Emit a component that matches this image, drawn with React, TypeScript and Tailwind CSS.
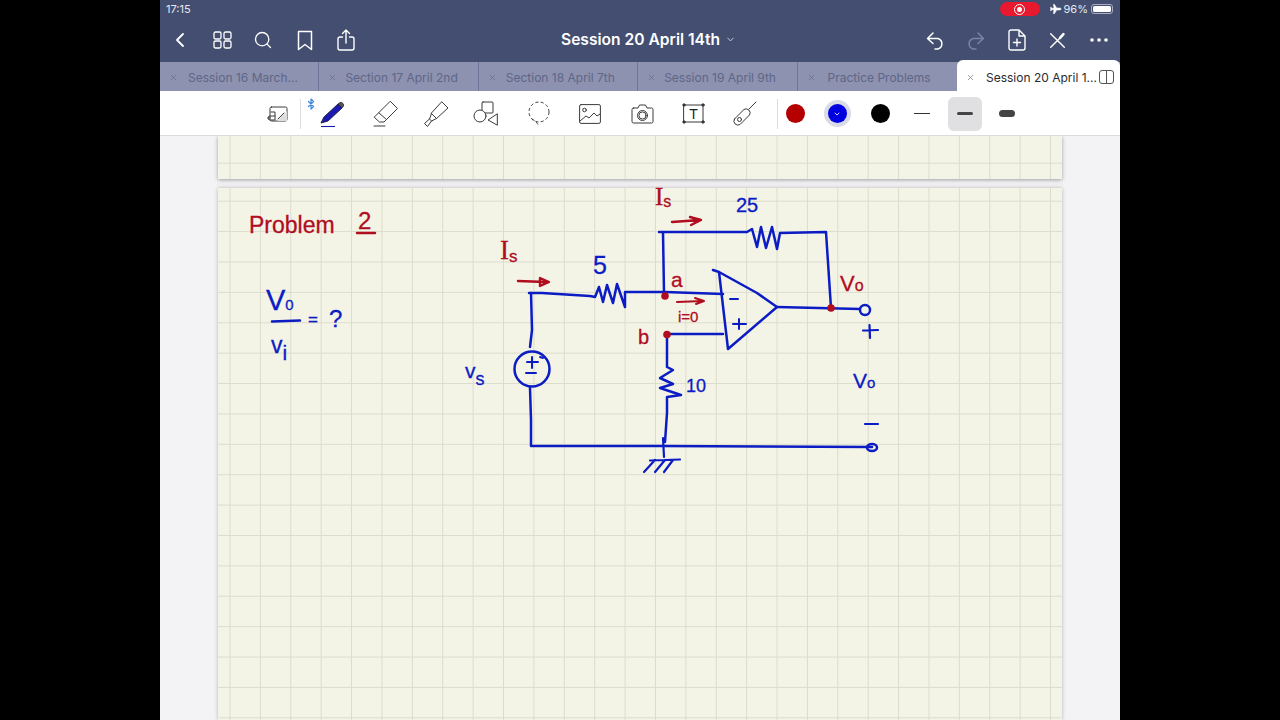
import React from "react";
import { Bluetooth, ChevronDown, ChevronLeft, Search, Plane, X } from "lucide-react";

const gridPage =
  "bg-[#f4f4e6] bg-[linear-gradient(#dcdccd_1.2px,transparent_1.2px),linear-gradient(90deg,#dcdccd_1.2px,transparent_1.2px)] bg-[size:30.4px_30.4px]";

function NavSlot({ children }: { children: React.ReactNode }) {
  return <div className="flex h-full w-[41.4px] shrink-0 items-center justify-center">{children}</div>;
}

function Tab({ label, gap, last }: { label: string; gap: string; last?: boolean }) {
  return (
    <div className={`flex h-[29px] w-[159.4px] shrink-0 items-center pl-[9px] pt-[2px] text-[12px] text-[#5f6686] ${last ? "" : "border-r border-[#6f769a]"}`}>
      <X size={9} strokeWidth={1.6} className={`shrink-0 ${gap}`} />
      <span className="whitespace-nowrap">{label}</span>
    </div>
  );
}

function ToolSlot({ w, children }: { w: string; children: React.ReactNode }) {
  return <div className={`relative flex h-full shrink-0 items-center justify-center ${w}`}>{children}</div>;
}

const ink = { fill: "none", stroke: "#3a3a3a", strokeWidth: 1, strokeLinecap: "round" as const, strokeLinejoin: "round" as const };

function Drawing() {
  const blue = { fill: "none", stroke: "#0b1cc4", strokeWidth: 2.5, strokeLinecap: "round" as const, strokeLinejoin: "round" as const };
  const red = { fill: "none", stroke: "#b00d1f", strokeWidth: 2.4, strokeLinecap: "round" as const, strokeLinejoin: "round" as const };
  const redText = { fill: "#b00d1f", stroke: "#b00d1f", strokeWidth: 0.3 };
  const blueText = { fill: "#0b1cc4", stroke: "#0b1cc4", strokeWidth: 0.3 };
  return (
    <svg viewBox="218 188 844 532" className="absolute inset-0 h-[532px] w-[844px] overflow-visible font-['Liberation_Sans',sans-serif]">
      {/* wires */}
      <path {...blue} d="M529 293 L542 293 L590 296 L595 297 L599 287 L603 302 L607 285 L613 303 L617 284 L625 307 L625 292 L665 292 L723 294" />
      <path {...blue} d="M531 293 L532 330 L530 347" />
      <circle {...blue} cx="532" cy="369" r="17.5" />
      <path {...blue} d="M530 388 L531 420 L531 446 L660 446 L872 447" />
      <ellipse {...blue} cx="872" cy="447.5" rx="5" ry="3.5" />
      <path {...blue} d="M532 357 V368 M527 362 H538 M526 373 H536 M540 357 L543 358" strokeWidth="2" />
      <path {...blue} d="M663 438 L664 457 M650 460.5 L680 459.5 M655 460 L644 472 M665 460 L655 472 M673 460 L664 472" strokeWidth="2.2" />
      <path {...blue} d="M664 293 L663 232 M659 232 L747 232 L752 229 L757 247 L761 227 L766 248 L772 227 L777 249 L780 233 L826 232 L831 308" />
      <path {...blue} d="M777 307 L860 309" />
      <circle {...blue} cx="865" cy="310" r="5" fill="#f4f4e6" />
      <path {...blue} d="M713 270 L719 272 L757 293 L777 307 L728 349 L719 272" />
      <path {...blue} d="M730 299 H738 M733 324 H746 M739 319 V329" strokeWidth="2" />
      <path {...blue} d="M667 334 L723 334 M667 334 L667 367 L673 370 L660 378 L673 384 L660 388 L681 395 L667 397 L667 413 L665 442" />
      <path {...blue} d="M863 330.5 L878 330 M869.5 325 L870 338 M865 424 H878" strokeWidth="2.2" />
      <path {...blue} d="M272 321.5 L300 320.5" />
      {/* red marks */}
      <path {...red} d="M518 281 L546 282 M540 278 L549 282 L540 286 Z" />
      <path {...red} d="M672 222 L700 220 M690 217 L701 220 L691 225" />
      <path {...red} d="M677 302 L703 301 M695 298 L704 301 L696 304" strokeWidth="2" />
      <path {...red} d="M357 233 H375" />
      <circle cx="665" cy="296" r="3.8" fill="#b00d1f" />
      <circle cx="667" cy="334.5" r="3.8" fill="#b00d1f" />
      <circle cx="831" cy="308" r="3.8" fill="#b00d1f" />
      {/* labels */}
      <text {...redText} x="249" y="233" fontSize="23">Problem</text>
      <text {...redText} x="358" y="229" fontSize="24">2</text>
      <text {...redText} x="500" y="259" fontSize="27" className="font-['Liberation_Serif',serif]">I<tspan fontSize="17" dy="3" className="font-['Liberation_Sans',sans-serif]">s</tspan></text>
      <text {...redText} x="655" y="205" fontSize="25" className="font-['Liberation_Serif',serif]">I<tspan fontSize="16" dy="2" className="font-['Liberation_Sans',sans-serif]">s</tspan></text>
      <text {...blueText} x="593" y="274" fontSize="25">5</text>
      <text {...blueText} x="736" y="212" fontSize="20">25</text>
      <text {...redText} x="671" y="287" fontSize="21">a</text>
      <text {...redText} x="638" y="344" fontSize="20">b</text>
      <text {...redText} x="678" y="322" fontSize="15">i=0</text>
      <text {...redText} x="840" y="291" fontSize="22">V<tspan fontSize="16">o</tspan></text>
      <text {...blueText} x="853" y="388" fontSize="21">V<tspan fontSize="15">o</tspan></text>
      <text {...blueText} x="686" y="392" fontSize="18">10</text>
      <text {...blueText} x="465" y="378" fontSize="21">v<tspan fontSize="18" dy="7">s</tspan></text>
      <text {...blueText} x="266" y="310" fontSize="29">V<tspan fontSize="15">0</tspan></text>
      <text {...blueText} x="271" y="353" fontSize="23">v<tspan dy="7" fontSize="21">i</tspan></text>
      <text {...blueText} x="308" y="325" fontSize="17">=</text>
      <text {...blueText} x="329" y="327" fontSize="24">?</text>
    </svg>
  );
}

export default function App() {
  return (
    <div className="flex h-[720px] w-[1280px] overflow-hidden bg-black font-['Inter',sans-serif]">
      <div className="w-40 shrink-0" />
      <div className="flex h-full w-[960px] shrink-0 flex-col overflow-hidden bg-[#f3f3f5]">
        {/* status + nav */}
        <div className="flex h-[62px] shrink-0 flex-col bg-[#434e70] text-white">
          <div className="flex h-[18px] items-center justify-between pl-[6px] pr-[7px] text-[11px] text-[#e6e8f0]">
            <span>17:15</span>
            <div className="flex items-center">
              <div className="flex h-[14px] w-[40px] items-center justify-center rounded-full bg-[#e8192e]">
                <div className="flex h-[11px] w-[11px] items-center justify-center rounded-full border border-white">
                  <div className="h-[5px] w-[5px] rounded-full bg-white" />
                </div>
              </div>
              <Plane size={12} fill="white" strokeWidth={1} className="ml-[9px] rotate-45" />
              <span className="ml-[3px]">96%</span>
              <div className="ml-[3px] flex h-[10px] w-[22px] items-center rounded-[3px] border border-[#a9aec2] p-[1px]">
                <div className="h-full w-[18px] rounded-[1.5px] bg-white" />
              </div>
            </div>
          </div>
          <div className="flex h-[44px] items-center">
            <div className="flex h-full w-[401px] shrink-0 items-center">
              <NavSlot><ChevronLeft size={24} strokeWidth={1.8} className="mr-[2px]" /></NavSlot>
              <NavSlot>
                <svg width="19" height="18" viewBox="0 0 19 18" fill="none" stroke="white" strokeWidth="1.3">
                  <rect x="1" y="1" width="7" height="7" rx="1.5" /><rect x="11" y="1" width="7" height="7" rx="1.5" />
                  <rect x="1" y="10" width="7" height="7" rx="1.5" /><rect x="11" y="10" width="7" height="7" rx="1.5" />
                </svg>
              </NavSlot>
              <NavSlot><Search size={20} strokeWidth={1.6} /></NavSlot>
              <NavSlot>
                <svg width="16" height="21" viewBox="0 0 16 21" fill="none" stroke="white" strokeWidth="1.5" strokeLinejoin="round">
                  <path d="M1.5 1.5 H14.5 V19.5 L8 14.5 L1.5 19.5 Z" />
                </svg>
              </NavSlot>
              <NavSlot>
                <svg width="18" height="22" viewBox="0 0 18 22" fill="none" stroke="white" strokeWidth="1.4" strokeLinecap="round" strokeLinejoin="round">
                  <path d="M5.5 8 H3 A2 2 0 0 0 1 10 V19 A2 2 0 0 0 3 21 H15 A2 2 0 0 0 17 19 V10 A2 2 0 0 0 15 8 H12.5 M9 14 V1 M5.5 4.5 L9 1 L12.5 4.5" />
                </svg>
              </NavSlot>
            </div>
            <div className="flex items-center whitespace-nowrap text-[15.6px] font-semibold">
              Session 20 April 14th
              <ChevronDown size={11} strokeWidth={2} className="ml-[5px] text-[#d5d8e4]" />
            </div>
            <div className="flex h-full flex-1 items-center justify-end">
              <NavSlot>
                <svg width="19" height="19" viewBox="0 0 19 19" fill="none" stroke="white" strokeWidth="1.5" strokeLinecap="round" strokeLinejoin="round" className="ml-[3px]">
                  <path d="M7 2 L1.5 7.5 L7 12.5 M1.5 7.5 H12 A5.5 5.5 0 0 1 12 18 H9" />
                </svg>
              </NavSlot>
              <NavSlot>
                <svg width="19" height="19" viewBox="0 0 19 19" fill="none" stroke="#7a83a3" strokeWidth="1.5" strokeLinecap="round" strokeLinejoin="round">
                  <path d="M12 2 L17.5 7.5 L12 12.5 M17.5 7.5 H7 A5.5 5.5 0 0 0 7 18 H10" />
                </svg>
              </NavSlot>
              <NavSlot>
                <svg width="18" height="22" viewBox="0 0 18 22" fill="none" stroke="white" strokeWidth="1.4" strokeLinecap="round" strokeLinejoin="round">
                  <path d="M3 1 H11 L17 7 V19 A2 2 0 0 1 15 21 H3 A2 2 0 0 1 1 19 V3 A2 2 0 0 1 3 1 Z M11 1 V7 H17 M9 10 V17 M5.5 13.5 H12.5" />
                </svg>
              </NavSlot>
              <NavSlot>
                <svg width="17" height="17" viewBox="0 0 20 20" fill="none" stroke="white" strokeWidth="1.7" strokeLinecap="round">
                  <path d="M2 2 L18 18 M2 18 L13 7" />
                  <path d="M13 7 L17 2.5" strokeWidth="3" />
                </svg>
              </NavSlot>
              <NavSlot>
                <svg width="18" height="4" viewBox="0 0 18 4" fill="white">
                  <circle cx="2" cy="2" r="1.8" /><circle cx="9" cy="2" r="1.8" /><circle cx="16" cy="2" r="1.8" />
                </svg>
              </NavSlot>
            </div>
          </div>
        </div>
        {/* tabs */}
        <div className="relative flex h-[29px] shrink-0 bg-[#8c92b0]">
          <Tab label="Session 16 March..." gap="mr-[10px]" />
          <Tab label="Section 17 April 2nd" gap="mr-[8px]" />
          <Tab label="Section 18 April 7th" gap="mr-[9px]" />
          <Tab label="Session 19 April 9th" gap="mr-[8px]" />
          <Tab label="Practice Problems" gap="mr-[12px]" last />
          <div className="absolute bottom-0 right-0 flex h-[31px] w-[163px] items-center rounded-t-[6px] bg-white pl-[9px] pt-[4px] text-[12px] text-[#2a2a2e]">
            <X size={9} strokeWidth={1.6} className="mr-[11px] shrink-0 text-[#666]" />
            <span className="w-[108px] whitespace-nowrap">Session 20 April 1...</span>
            <svg width="15" height="14" viewBox="0 0 15 14" fill="none" stroke="#555" strokeWidth="1" className="ml-[5px] mt-[-2px] shrink-0">
              <rect x="0.5" y="0.5" width="14" height="13" rx="2.5" /><path d="M7.5 0.5 V13.5" />
            </svg>
          </div>
        </div>
        {/* toolbar */}
        <div className="flex h-[45px] shrink-0 items-center border-b border-[#dcdcdc] bg-white pl-[107px] pt-[1px]">
          <div className="mt-[1px] h-[16px] w-[21px] shrink-0">
            <svg width="21" height="16" viewBox="0 0 21 16" {...ink}>
              <rect x="3" y="1" width="17" height="14" rx="1.5" />
              <path d="M20 5 V15 H10 Z" fill="#ddd" stroke="none" />
              <path d="M11 13 L17 7" />
              <path d="M4 6 H8 V14 H3 A2 2 0 0 1 3 10 H8 M1 12 H3" />
            </svg>
          </div>
          <div className="ml-[12px] h-[30px] w-px shrink-0 bg-[#dddddd]" />
          <ToolSlot w="ml-[5px] w-[52px]">
            <Bluetooth size={12} strokeWidth={2.4} className="absolute left-[-1px] top-[6px] text-[#3b86d8]" />
            <svg width="28" height="28" viewBox="0 0 28 28" fill="none" strokeLinejoin="round" className="mt-[1px]">
              <path d="M3 23 L6 17 L20 4 L24 8 L10 21 Z" fill="#1a1ab0" stroke="#22224a" strokeWidth="1" />
              <path d="M20 4 L22 2.5 Q24 2 25 3.5 Q26 5 25.5 6 L24 8 Z" fill="#555" stroke="#222" strokeWidth="0.8" />
              <path d="M3 26.5 H17" stroke="#1a1ab0" strokeWidth="1.1" />
            </svg>
          </ToolSlot>
          <ToolSlot w="w-[53px]">
            <svg width="28" height="28" viewBox="0 0 28 28" {...ink}>
              <path d="M19.5 1.5 L26.5 8.5 L13 22 H8.5 L3.5 17.5 Z M8 13 L15.5 19.5 M3 26 H14" />
            </svg>
          </ToolSlot>
          <ToolSlot w="w-[50px]">
            <svg width="28" height="28" viewBox="0 0 28 28" {...ink}>
              <path d="M20 2 L26 8 L14.5 18.5 L9.5 13.5 Z M9.5 13.5 L7.5 19 L2.5 23.5 L5.5 26.5 L9.5 21 L14.5 18.5 M7.5 19 L9.5 21" />
            </svg>
          </ToolSlot>
          <ToolSlot w="w-[50px]">
            <svg width="26" height="26" viewBox="0 0 26 26" {...ink}>
              <rect x="9" y="1" width="11" height="11" rx="1" />
              <circle cx="7" cy="15" r="6" fill="white" />
              <path d="M24 13 L15 19 L24 24 Z" />
            </svg>
          </ToolSlot>
          <ToolSlot w="w-[56px]">
            <svg width="24" height="26" viewBox="0 0 24 26" {...ink}>
              <circle cx="12" cy="11" r="10" strokeDasharray="3 2.4" strokeLinecap="butt" />
              <path d="M5 18 Q9 20 12 25" strokeDasharray="3 2.4" strokeLinecap="butt" />
            </svg>
          </ToolSlot>
          <ToolSlot w="w-[46px]">
            <svg width="22" height="20" viewBox="0 0 22 20" {...ink}>
              <rect x="0.6" y="0.6" width="20.8" height="18.8" rx="1.5" />
              <circle cx="5.5" cy="6" r="1.8" />
              <path d="M1 17 L7 12 L10 14 L15 9 L18 12 L21 10" />
            </svg>
          </ToolSlot>
          <ToolSlot w="w-[58px]">
            <svg width="23" height="20" viewBox="0 0 23 20" {...ink}>
              <path d="M2.5 4 H7 L8.5 1 H14.5 L16 4 H20.5 A1.5 1.5 0 0 1 22 5.5 V17.5 A1.5 1.5 0 0 1 20.5 19 H2.5 A1.5 1.5 0 0 1 1 17.5 V5.5 A1.5 1.5 0 0 1 2.5 4 Z" />
              <circle cx="11.5" cy="11.5" r="5" /><circle cx="11.5" cy="11.5" r="3.6" />
            </svg>
          </ToolSlot>
          <ToolSlot w="w-[44px]">
            <svg width="23" height="21" viewBox="0 0 23 21" {...ink}>
              <rect x="2" y="2" width="19" height="17" />
              <circle cx="2" cy="2" r="1.2" fill="#333" /><circle cx="21" cy="2" r="1.2" fill="#333" />
              <circle cx="2" cy="19" r="1.2" fill="#333" /><circle cx="21" cy="19" r="1.2" fill="#333" />
              <text x="11.5" y="15.5" textAnchor="middle" fontSize="14" fill="#222" stroke="none" className="font-['Liberation_Sans',sans-serif]">T</text>
            </svg>
          </ToolSlot>
          <ToolSlot w="w-[60px]">
            <svg width="24" height="26" viewBox="0 0 24 26" {...ink}>
              <path d="M1.5 18 L11 8.5 A4 4 0 0 1 16.5 14 L7 23.5 A4 4 0 0 1 1.5 18 Z" />
              <circle cx="6.5" cy="18.5" r="2" />
              <path d="M16 8 L23 1" />
            </svg>
          </ToolSlot>
          <div className="ml-[2px] h-[30px] w-px shrink-0 bg-[#dddddd]" />
          <ToolSlot w="w-[34px]"><div className="h-[19px] w-[19px] rounded-full bg-[#b40000]" /></ToolSlot>
          <ToolSlot w="w-[50px]">
            <div className="flex h-[27px] w-[27px] items-center justify-center rounded-full bg-[#d9dbe6]">
              <div className="flex h-[19px] w-[19px] items-center justify-center rounded-full bg-[#0000e0]">
                <ChevronDown size={8} strokeWidth={2.5} className="text-white" />
              </div>
            </div>
          </ToolSlot>
          <ToolSlot w="w-[36px]"><div className="h-[19px] w-[19px] rounded-full bg-black" /></ToolSlot>
          <ToolSlot w="w-[48px]"><div className="h-[1.5px] w-[16px] bg-[#333]" /></ToolSlot>
          <div className="ml-[2px] flex h-[34px] w-[34px] shrink-0 items-center justify-center rounded-md bg-[#e0e0e2]">
            <div className="h-[3px] w-[16px] rounded-full bg-[#444]" />
          </div>
          <ToolSlot w="w-[50px]"><div className="h-[7px] w-[16px] rounded-full bg-[#444]" /></ToolSlot>
        </div>
        {/* canvas */}
        <div className="flex min-h-0 flex-1 flex-col gap-[9px] overflow-hidden px-[58px]">
          <div className={`h-[43px] w-[844px] shrink-0 bg-[position:11.5px_-3.7px] shadow-[0_1px_4px_rgba(0,0,0,0.35)] ${gridPage}`} />
          <div className={`relative h-[532px] w-[844px] shrink-0 bg-[position:11.5px_12.7px] shadow-[0_0_4px_rgba(0,0,0,0.25)] ${gridPage}`}>
            <Drawing />
          </div>
        </div>
      </div>
      <div className="w-40 shrink-0" />
    </div>
  );
}
